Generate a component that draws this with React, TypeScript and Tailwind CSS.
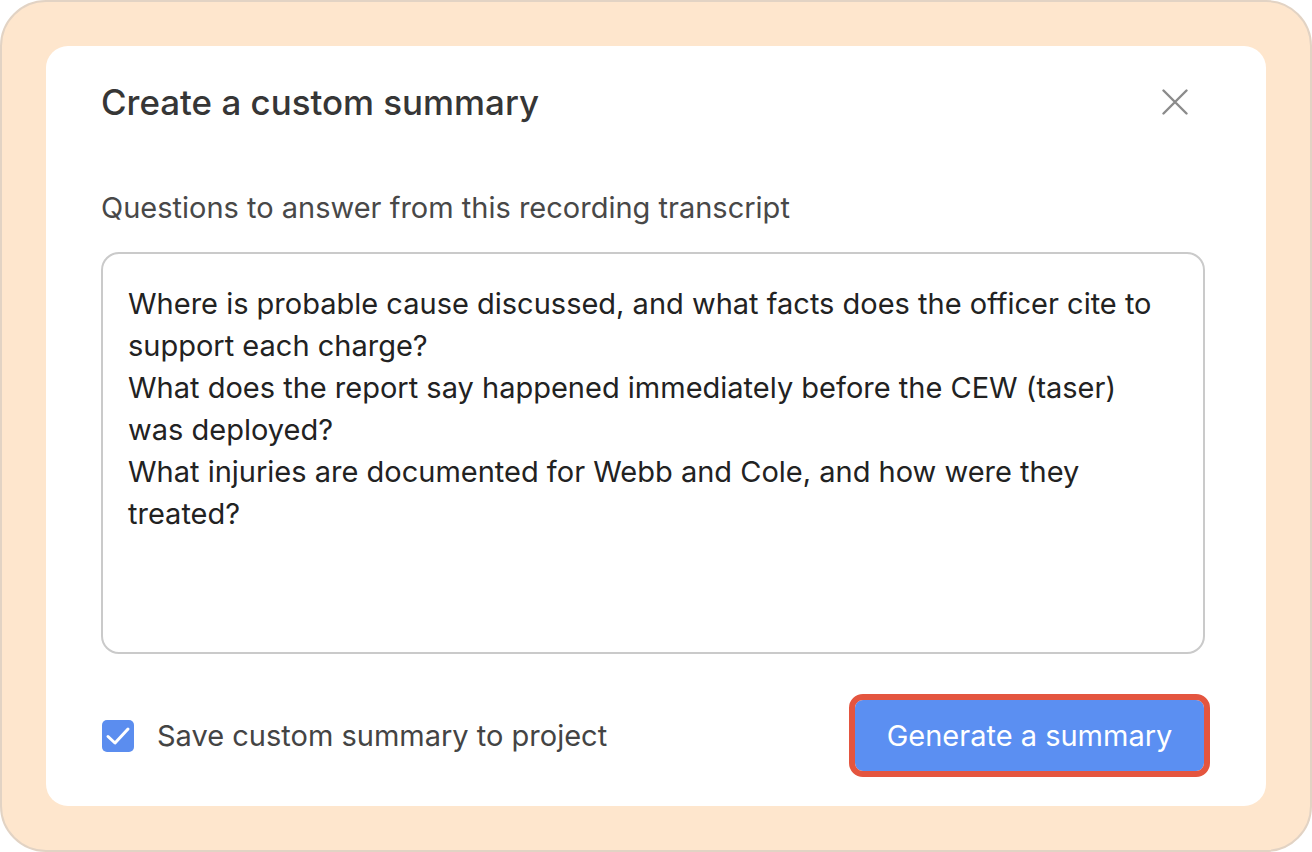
import React from "react";

export default function App() {
  const lines = [
    "Where is probable cause discussed, and what facts does the officer cite to",
    "support each charge?",
    "What does the report say happened immediately before the CEW (taser)",
    "was deployed?",
    "What injuries are documented for Webb and Cole, and how were they",
    "treated?",
  ];
  return (
    <div className="w-[1312px] h-[852px] bg-white" style={{ fontFamily: "Inter, 'Noto Sans', sans-serif" }}>
      <div className="w-full h-full rounded-[46px] border-2 border-[#e2d3c4] bg-[#fee6cd] p-[44px]">
        <div className="w-full h-full rounded-[22px] bg-white px-[55px] flex flex-col">
          <div className="flex items-center justify-between h-[44px] mt-[33.5px]">
            <h1 className="text-[34.9px] leading-[44px] font-medium text-[#363636]">
              Create a custom summary
            </h1>
            <svg width="26" height="26" viewBox="0 0 26 26" className="mr-[23px]">
              <path d="M1.5 1.5 L24.5 24.5 M24.5 1.5 L1.5 24.5" stroke="#8b8b8b" strokeWidth="2.4" strokeLinecap="round" />
            </svg>
          </div>
          <div className="mt-[66.5px] text-[29px] leading-[36px] text-[#484848]">
            Questions to answer from this recording transcript
          </div>
          <div className="mt-[26px] h-[402px] mr-[6px] rounded-[18px] border-2 border-[#cacaca] pl-[25px] pt-[29px]">
            {lines.map((l, i) => (
              <div key={i} className="text-[29px] leading-[42px] text-[#222222] whitespace-nowrap">
                {l}
              </div>
            ))}
          </div>
          <div className="mt-[46px] flex items-center justify-between mr-[7px]">
            <label className="flex items-center gap-[23px] ml-[1px]">
              <span className="w-[32px] h-[32px] rounded-[5px] bg-[#5b8def] flex items-center justify-center">
                <svg width="32" height="32" viewBox="0 0 32 32">
                  <path d="M6 16.5 L13 23 L26 9" stroke="white" strokeWidth="3" fill="none" strokeLinecap="round" strokeLinejoin="round" />
                </svg>
              </span>
              <span className="text-[29px] leading-[36px] text-[#444444]">Save custom summary to project</span>
            </label>
            <button className="w-[349px] h-[71px] rounded-[8px] bg-[#5b8ff2] text-white text-[29px] outline-[6px] outline-solid outline-[#e4553f]">
              Generate a summary
            </button>
          </div>
        </div>
      </div>
    </div>
  );
}
